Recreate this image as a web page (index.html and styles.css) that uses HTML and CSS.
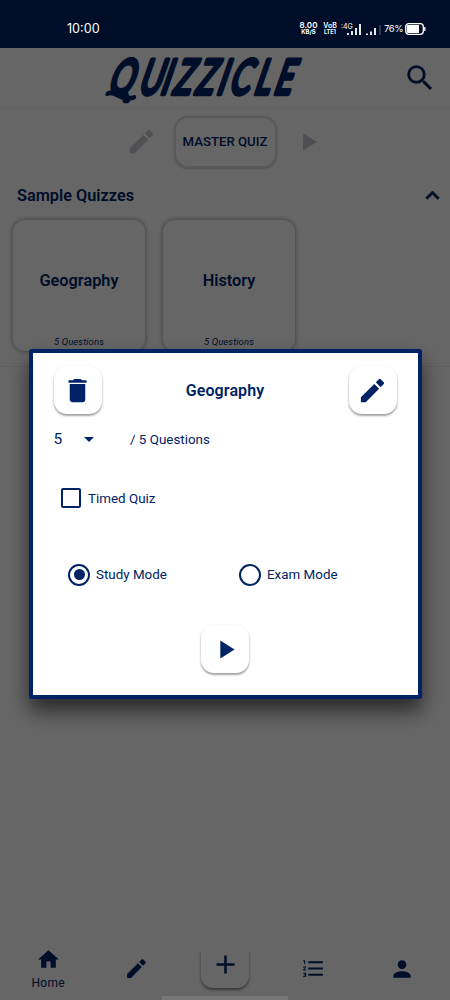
FILE: index.html
```html
<!DOCTYPE html>
<html lang="en">
<head>
<meta charset="utf-8">
<title>Quizzicle</title>
<link rel="stylesheet" href="styles.css">
</head>
<body>
<svg class="defs" width="0" height="0">
  <symbol id="pencil" viewBox="0 0 24 24"><path d="M3 17.250V21h3.750L17.100 10.650l-3.750-3.750L3 17.250zM20.710 7.040a1 1 0 0 0 0-1.410l-2.340-2.340a1 1 0 0 0-1.410 0l-2.400 2.400 3.750 3.750 2.400-2.400z"/></symbol>
  <symbol id="play" viewBox="0 0 24 24"><path d="M8 5v14l11-7z"/></symbol>
</svg>
<div class="screen">
  <div class="status">
    <span class="clock">10:00</span>
    <div class="indicators">
      <span class="stack speed"><b>8.00</b><small>KB/S</small></span>
      <span class="stack volte"><b>VoB</b><small>LTE1</small></span>
      <span class="net">:4G</span>
      <svg class="bars" width="36" height="14" viewBox="0 0 36 14"><path d="M1 13V11M5 13V9M9 13V6M13 13V2M20 13V11.500M24 13V9.500M28 13V6"/><path class="faint" d="M33 13V3"/></svg>
      <span class="percent">76%</span>
      <svg class="battery" width="21" height="12" viewBox="0 0 21 12"><rect x=".7" y=".7" width="17.600" height="10.600" rx="3"/><path class="fill" d="M3 2h11v8H3a1.200 1.200 0 0 1-1.200-1.200V3.200A1.200 1.200 0 0 1 3 2z"/><path d="M19.800 4v4"/></svg>
    </div>
  </div>

  <header class="header">
    <svg class="logo" width="210" height="58" viewBox="0 0 210 58">
      <g transform="translate(3 44.500) skewX(-19)">
        <text transform="scale(.64 1)" x="4 51 86 105 140 174 193 232 263" y="0">QUIZZICLE</text>
        <path class="swash" d="M4 0C11 -4 20 8 31 4"/>
      </g>
    </svg>
    <svg class="search" width="34" height="34" viewBox="0 0 24 24"><path d="M15.500 14h-.79l-.28-.27A6.470 6.470 0 0 0 16 9.500 6.500 6.500 0 1 0 9.500 16c1.610 0 3.090-.59 4.230-1.570l.27.28v.79l5 4.990L20.490 19l-4.990-5zm-6 0C7.010 14 5 11.990 5 9.500S7.010 5 9.500 5 14 7.010 14 9.500 11.990 14 9.500 14z"/></svg>
  </header>

  <section class="master">
    <svg class="pale" width="31" height="31"><use href="#pencil"/></svg>
    <button class="master-button">MASTER QUIZ</button>
    <svg class="pale" width="30" height="30"><use href="#play"/></svg>
  </section>

  <section class="samples">
    <div class="samples-head">
      <h2>Sample Quizzes</h2>
      <svg class="chevron" width="27" height="27" viewBox="0 0 24 24"><path d="M12 8l-6 6 1.410 1.410L12 10.830l4.590 4.580L18 14z"/></svg>
    </div>
    <div class="cards">
      <article class="card"><h3>Geography</h3><em>5 Questions</em></article>
      <article class="card"><h3>History</h3><em>5 Questions</em></article>
    </div>
  </section>

  <nav class="nav">
    <a class="tab home"><svg width="25" height="25" viewBox="0 0 24 24"><path d="M10 20v-6h4v6h5v-8h3L12 3 2 12h3v8z"/></svg><span>Home</span></a>
    <a class="tab"><svg width="25" height="25"><use href="#pencil"/></svg></a>
    <a class="tab"><span class="add"><svg width="31" height="31" viewBox="0 0 24 24"><path d="M19 13h-6v6h-2v-6H5v-2h6V5h2v6h6z"/></svg></span></a>
    <a class="tab"><svg width="25" height="25" viewBox="0 0 24 24"><path d="M2 17h2v.5H3v1h1v.5H2v1h3v-4H2v1zm1-9h1V4H2v1h1v3zm-1 3h1.800L2 13.100v.9h3v-1H3.200L5 10.900V10H2v1zm5-6v2h14V5H7zm0 14h14v-2H7v2zm0-6h14v-2H7v2z"/></svg></a>
    <a class="tab"><svg width="26" height="26" viewBox="0 0 24 24"><path d="M12 12a4 4 0 1 0 0-8 4 4 0 0 0 0 8zm0 2c-2.670 0-8 1.340-8 4v2h16v-2c0-2.660-5.330-4-8-4z"/></svg></a>
  </nav>
</div>

<div class="backdrop">
  <div class="dialog">
    <div class="dialog-head">
      <button class="tile"><svg width="31" height="31" viewBox="0 0 24 24"><path d="M6 19c0 1.100.9 2 2 2h8a2 2 0 0 0 2-2V7H6v12zM19 4h-3.500l-1-1h-5l-1 1H5v2h14z"/></svg></button>
      <h1>Geography</h1>
      <button class="tile"><svg width="31" height="31"><use href="#pencil"/></svg></button>
    </div>
    <div class="count"><span class="number">5</span><i class="caret"></i><span>/ 5 Questions</span></div>
    <div class="timed"><i class="checkbox"></i><span>Timed Quiz</span></div>
    <div class="modes">
      <div class="mode"><i class="radio checked"></i><span>Study Mode</span></div>
      <div class="mode"><i class="radio"></i><span>Exam Mode</span></div>
    </div>
    <button class="tile start"><svg width="31" height="31"><use href="#play"/></svg></button>
  </div>
  <div class="gesture"></div>
</div>
</body>
</html>
```

FILE: styles.css
```css
* { box-sizing: border-box; }
body { margin: 0; font-family: Roboto, sans-serif; color: #002366; background: #fff; }
svg { display: block; fill: #002366; flex: none; }
h1, h2, h3 { margin: 0; font-weight: 600; }
button { font: inherit; color: inherit; border: 0; padding: 0; background: #fff; }
.defs { position: absolute; }
.screen { width: 450px; height: 1000px; display: flex; flex-direction: column; overflow: hidden; }

.status { height: 48px; flex: none; background: #002366; color: #fff; display: flex; justify-content: space-between; padding: 10px 24px 0 67px; }
.clock, .indicators { position: relative; z-index: 3; }
.clock { font-family: Inter, sans-serif; font-size: 12.600px; line-height: 37px; }
.indicators { display: flex; align-items: center; height: 37px; }
.stack { display: flex; flex-direction: column; align-items: center; }
.stack b { font: 600 8px/7px Inter, sans-serif; }
.stack small { font: 700 6px/6px Inter, sans-serif; }
.speed { width: 19px; }
.volte { width: 14px; margin-left: 5px; }
.volte b { font-size: 7px; }
.volte small { font-size: 5.500px; }
.net { font: 7px/8px Inter, sans-serif; width: 12px; margin: 0 -6px 4px 4px; }
.indicators svg { fill: none; stroke: #fff; }
.bars { stroke-width: 1.800; }
.indicators .faint { stroke: #52617d; stroke-width: 1; }
.percent { font: 9.500px Inter, sans-serif; letter-spacing: -.4px; width: 19px; margin: 0 2px 0 1px; }
.battery { stroke-width: 1.300; }
.battery .fill { fill: #fff; stroke: none; }

.header { height: 60px; flex: none; display: flex; justify-content: space-between; align-items: center; padding: 0 13px 0 101px; border-bottom: 1px solid #f2f2f2; }
.logo { overflow: visible; }
.logo text { font: 400 48px Lato, sans-serif; stroke: #002366; stroke-width: 4.500; stroke-linejoin: round; }
.logo .swash { fill: none; stroke: #002366; stroke-width: 5; stroke-linecap: round; }

.master { height: 67px; flex: none; display: flex; justify-content: center; align-items: center; gap: 16.500px; padding: 0 1px 0 0; }
.master-button { width: 103px; height: 52px; border: 2px solid #dedede; border-radius: 14px; font-size: 13.200px; font-weight: 500; box-shadow: 0 1px 2px #ccc; }
.pale { fill: #c5c5d1; }

.samples { height: 192px; flex: none; border-bottom: 1px solid #f0f0f0; }
.samples-head { height: 45px; display: flex; justify-content: space-between; align-items: center; padding: 0 4px 5px 17px; }
.samples-head h2 { font-size: 16.300px; }
.chevron { stroke: #002366; stroke-width: .7; }
.cards { display: flex; gap: 18px; padding-left: 13px; }
.card { width: 132px; height: 131px; border-radius: 12px; box-shadow: 0 0 4px 1px #b4b4b4; display: grid; grid-template-rows: 1fr 17px; justify-items: center; padding-top: 6px; }
.card h3 { font-size: 16.300px; align-self: center; }
.card em { font-size: 9.500px; line-height: 16px; letter-spacing: .1px; }

.nav { height: 60px; margin-top: auto; display: grid; grid-template-columns: repeat(5, 88.500px); padding-left: 4px; }
.tab { display: flex; flex-direction: column; align-items: center; padding-top: 15.500px; }
.home { padding-top: 7px; }
.home span { font-size: 12px; line-height: 14px; letter-spacing: .3px; margin-top: 4px; }
.add { width: 48px; height: 48px; margin-top: -15.500px; display: grid; place-items: center; border-radius: 12px; box-shadow: 0 2px 3px #888; clip-path: inset(12px -5px -6px -5px); }

.backdrop { position: absolute; inset: 0 auto auto 0; width: 450px; height: 1000px; background: rgba(0, 0, 0, .6); padding: 349px 28px 0; display: flex; flex-direction: column; align-items: center; }
.dialog { width: 393px; height: 350px; flex: none; display: flex; flex-direction: column; background: #fff; border: 4px solid #002366; border-radius: 3px; padding: 13px 21px 0 21px; box-shadow: 0 12px 20px rgba(0, 0, 0, .58); }
.dialog-head { display: flex; justify-content: space-between; align-items: center; }
.dialog-head h1 { font-size: 16px; letter-spacing: .1px; }
.tile { width: 48px; height: 48px; display: grid; place-items: center; border-radius: 13px; box-shadow: 0 2px 2px rgba(0, 0, 0, .3), 0 1px 3px rgba(0, 0, 0, .12); }
.count, .timed, .modes, .mode { display: flex; align-items: center; font-size: 13.400px; letter-spacing: 0; }
.count { height: 30px; margin-top: 10px; }
.count .number { font-size: 15.500px; width: 30px; }
.caret { border: 5px solid transparent; border-top-color: #002366; border-bottom: 0; margin-right: 36.500px; }
.timed { margin: 34px 0 0 7.500px; height: 20px; gap: 7px; }
.checkbox { width: 20px; height: 20px; border: 2px solid #002366; border-radius: 2px; }
.modes { height: 22px; margin: 55.500px 0 0 14.500px; }
.mode { width: 171px; flex: none; gap: 6px; }
.radio { width: 22px; height: 22px; border: 2px solid #002366; border-radius: 50%; display: grid; place-items: center; }
.checked::after { content: ""; width: 11px; height: 11px; border-radius: 50%; background: #002366; }
.start { align-self: center; margin-top: 39.500px; }
.gesture { width: 126px; height: 4px; margin-top: auto; background: #777; }
```
